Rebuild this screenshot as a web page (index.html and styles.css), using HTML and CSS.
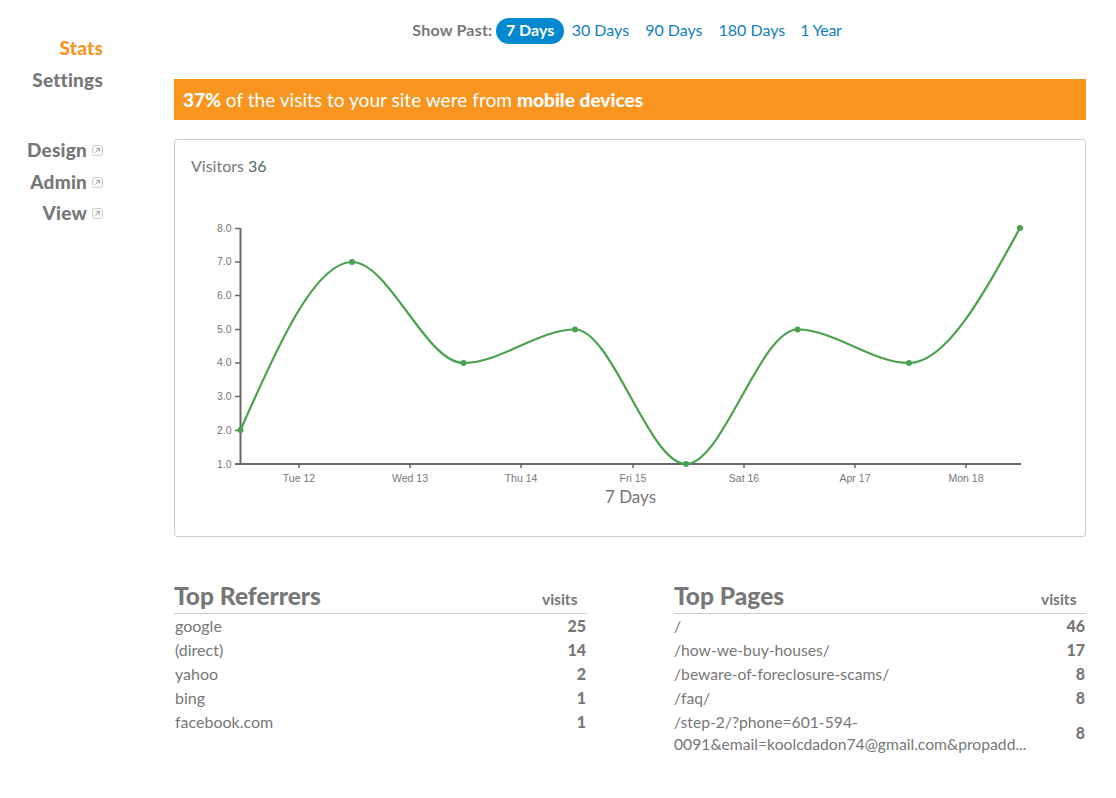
FILE: index.html
```html
<!DOCTYPE html>
<html lang="en">
<head>
<meta charset="utf-8">
<title>Stats</title>
<link rel="stylesheet" href="styles.css">
</head>
<body>
<div class="app">
  <nav class="side">
    <ul class="nav-group">
      <li><a class="nav-link active">Stats</a></li>
      <li><a class="nav-link">Settings</a></li>
    </ul>
    <ul class="nav-group ext">
      <li><a class="nav-link">Design<svg class="ext-ico" viewBox="0 0 11 11"><rect x="0.5" y="0.5" width="10" height="10" rx="2" fill="#f6f8f6" stroke="#ccd4cd"/><path d="M3.5 7.5L7.2 3.8M4.4 3.5H7.5V6.6" fill="none" stroke="#a3a3a3"/></svg></a></li>
      <li><a class="nav-link">Admin<svg class="ext-ico" viewBox="0 0 11 11"><rect x="0.5" y="0.5" width="10" height="10" rx="2" fill="#f6f8f6" stroke="#ccd4cd"/><path d="M3.5 7.5L7.2 3.8M4.4 3.5H7.5V6.6" fill="none" stroke="#a3a3a3"/></svg></a></li>
      <li><a class="nav-link">View<svg class="ext-ico" viewBox="0 0 11 11"><rect x="0.5" y="0.5" width="10" height="10" rx="2" fill="#f6f8f6" stroke="#ccd4cd"/><path d="M3.5 7.5L7.2 3.8M4.4 3.5H7.5V6.6" fill="none" stroke="#a3a3a3"/></svg></a></li>
    </ul>
  </nav>
  <main class="main">
    <div class="range">
      <span class="range-label">Show Past:</span>
      <a class="pill on">7 Days</a>
      <a class="pill">30 Days</a>
      <a class="pill">90 Days</a>
      <a class="pill">180 Days</a>
      <a class="pill">1 Year</a>
    </div>
    <div class="banner"><b>37%</b> of the visits to your site were from <b>mobile devices</b></div>
    <section class="card">
      <div class="card-title">Visitors <span class="count">36</span></div>
      <svg class="chart" width="910" height="340" viewBox="175 190 910 340">
        <g class="axis-main">
          <path d="M240.500 228V465M1021 464H235"/>
        </g>
        <g class="axis-ticks">
          <path d="M235 228.500h5M235 262h5M235 295.500h5M235 329.500h5M235 363h5M235 396.500h5M235 430.500h5"/>
          <path d="M299 464v4M410 464v4M521 464v4M633 464v4M744 464v4M855 464v4M966 464v4"/>
        </g>
        <g class="ticks-y">
          <text x="231.500" y="232">8.0</text><text x="231.500" y="265">7.0</text><text x="231.500" y="299">6.0</text><text x="231.500" y="333">5.0</text><text x="231.500" y="366">4.0</text><text x="231.500" y="400">3.0</text><text x="231.500" y="434">2.0</text><text x="231.500" y="468">1.0</text>
        </g>
        <g class="ticks-x">
          <text x="299" y="482">Tue 12</text><text x="410" y="482">Wed 13</text><text x="521" y="482">Thu 14</text><text x="633" y="482">Fri 15</text><text x="744" y="482">Sat 16</text><text x="855" y="482">Apr 17</text><text x="966" y="482">Mon 18</text>
        </g>
        <text class="x-label" x="630.500" y="503">7 Days</text>
        <path class="line" d="M240.500 430C277.500 346 315 262 352 262C389 262 426 363 463.500 363C500.500 363 538 329.500 575 329.500C612 329.500 649 464 686 464C723 464 760 329.500 797.500 329.500C834.500 329.500 872 363 909 363C946 363 983 295.500 1020 228"/>
        <g class="dots">
          <circle cx="240.500" cy="430" r="3"/><circle cx="352" cy="262" r="3"/><circle cx="463.500" cy="363" r="3"/><circle cx="575" cy="329.500" r="3"/><circle cx="686" cy="464" r="3"/><circle cx="797.500" cy="329.500" r="3"/><circle cx="909" cy="363" r="3"/><circle cx="1020" cy="228" r="3"/>
        </g>
      </svg>
    </section>
    <div class="tables">
      <table class="stat">
        <thead><tr><th class="h-name">Top Referrers</th><th class="h-val">visits</th></tr></thead>
        <tbody>
          <tr><td>google</td><td class="val">25</td></tr>
          <tr><td>(direct)</td><td class="val">14</td></tr>
          <tr><td>yahoo</td><td class="val">2</td></tr>
          <tr><td>bing</td><td class="val">1</td></tr>
          <tr><td>facebook.com</td><td class="val">1</td></tr>
        </tbody>
      </table>
      <table class="stat stat-pages">
        <thead><tr><th class="h-name">Top Pages</th><th class="h-val">visits</th></tr></thead>
        <tbody>
          <tr><td>/</td><td class="val">46</td></tr>
          <tr><td>/how-we-buy-houses/</td><td class="val">17</td></tr>
          <tr><td>/beware-of-foreclosure-scams/</td><td class="val">8</td></tr>
          <tr><td>/faq/</td><td class="val">8</td></tr>
          <tr><td>/step-2/?phone=601-594-<br>0091&amp;email=koolcdadon74@gmail.com&amp;propadd...</td><td class="val">8</td></tr>
        </tbody>
      </table>
    </div>
  </main>
</div>
</body>
</html>
```
FILE: styles.css
```css
* { box-sizing: border-box; }
html, body { margin: 0; padding: 0; background: #fff; }
body { font-family: "Lato", "Open Sans", sans-serif; color: #777; }
.app { display: flex; width: 1116px; min-height: 798px; }
.side { width: 174px; flex: none; padding: 32px 71px 0 0; }
.nav-group { list-style: none; margin: 0; padding: 0; }
.nav-group.ext { margin-top: 38px; }
.nav-group li { height: 32px; text-align: right; line-height: 32px; }
.nav-group.ext li { height: 31.500px; line-height: 31.500px; }
.nav-link { font-size: 19px; font-weight: 900; letter-spacing: 0.2px; color: #777; white-space: nowrap; }
.nav-link.active { color: #f9951f; }
.ext-ico { width: 11px; height: 11px; margin-left: 5px; vertical-align: 1px; }
.main { width: 912px; flex: none; }
.range { height: 79px; padding: 18px 0 0 2px; display: flex; justify-content: center; align-items: flex-start; font-size: 16px; line-height: 24px; }
.range-label { font-weight: 700; color: #777; margin-right: 4px; letter-spacing: 0.2px; }
.pill { color: #0f80bf; padding: 0 8px; border-radius: 13px; height: 26px; }
.pill:last-child { padding-left: 7px; letter-spacing: -0.3px; }
.pill.on { background: #0089d0; color: #fff; font-weight: 700; padding: 0 9.500px; }
.banner { height: 41px; line-height: 41px; background: #f9951f; color: #fff; font-size: 19.100px; padding-left: 9px; }
.banner b { font-weight: 900; }
.card { margin-top: 19px; height: 398px; border: 1px solid #ccc; border-radius: 3px; }
.card-title { padding: 17px 16px 0; font-size: 16px; line-height: 18px; height: 50px; }
.count { color: #4d6b6b; }
.chart { display: block; }
.axis-main path { fill: none; stroke: #6b6663; stroke-width: 2; }
.axis-ticks path { fill: none; stroke: #6b6663; stroke-width: 1.500; }
.ticks-y text { font: 10.500px "Liberation Sans", Arial, sans-serif; fill: #777; text-anchor: end; }
.ticks-x text { font: 10.500px "Liberation Sans", Arial, sans-serif; fill: #777; text-anchor: middle; }
.x-label { font-size: 17px; fill: #777; text-anchor: middle; }
.line { fill: none; stroke: #4aa24e; stroke-width: 2.200; }
.dots circle { fill: #4aa24e; }
.tables { display: flex; justify-content: space-between; margin-top: 43px; align-items: flex-start; }
.stat { border-collapse: collapse; table-layout: fixed; font-size: 16px; width: 413px; }
.stat-pages { width: 412px; font-size: 15.700px; }
.stat thead tr { border-bottom: 1px solid #ccc; }
.stat th { padding: 1px 0; text-align: left; height: 33px; vertical-align: baseline; }
.h-name { font-size: 24.500px; font-weight: 900; line-height: 30px; }
.stat .h-val { width: 45px; font-size: 15.500px; font-weight: 700; padding-right: 9px; }
.stat td { padding: 1px 0 1px 1px; line-height: 22px; }
.stat-pages td { padding-left: 0; }
.stat td.val { text-align: right; font-weight: 900; padding: 0 1px 0 0; font-size: 16px; }
```
